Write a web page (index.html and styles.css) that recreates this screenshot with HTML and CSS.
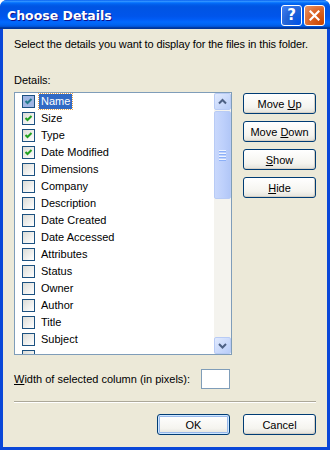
FILE: index.html
```html
<!DOCTYPE html>
<html lang="en">
<head>
    <meta charset="UTF-8">
    <title>Choose Details</title>
    <link rel="stylesheet" href="styles.css">
</head>
<body>
    <div class="window">
        <div class="titlebar">
            <span class="title">Choose Details</span>
            <div class="caption-buttons">
                <span class="cap-btn help">?</span>
                <span class="cap-btn close">
                    <svg width="11" height="11" viewBox="0 0 11 11"><path d="M1.5 1.5 L9.5 9.5 M9.5 1.5 L1.5 9.5" stroke="#fff" stroke-width="2.2" stroke-linecap="square"/></svg>
                </span>
            </div>
        </div>

        <div class="body">
            <p class="intro">Select the details you want to display for the files in this folder.</p>
            <p class="caption">Details:</p>

            <div class="main">
                <div class="listbox">
                    <ul class="items">
                        <li class="item selected"><span class="check on"></span><span class="text">Name</span></li>
                        <li class="item"><span class="check on"></span><span class="text">Size</span></li>
                        <li class="item"><span class="check on"></span><span class="text">Type</span></li>
                        <li class="item"><span class="check on"></span><span class="text">Date Modified</span></li>
                        <li class="item"><span class="check"></span><span class="text">Dimensions</span></li>
                        <li class="item"><span class="check"></span><span class="text">Company</span></li>
                        <li class="item"><span class="check"></span><span class="text">Description</span></li>
                        <li class="item"><span class="check"></span><span class="text">Date Created</span></li>
                        <li class="item"><span class="check"></span><span class="text">Date Accessed</span></li>
                        <li class="item"><span class="check"></span><span class="text">Attributes</span></li>
                        <li class="item"><span class="check"></span><span class="text">Status</span></li>
                        <li class="item"><span class="check"></span><span class="text">Owner</span></li>
                        <li class="item"><span class="check"></span><span class="text">Author</span></li>
                        <li class="item"><span class="check"></span><span class="text">Title</span></li>
                        <li class="item"><span class="check"></span><span class="text">Subject</span></li>
                        <!-- next row is scrolled just out of view, only its box peeks in -->
                        <li class="item"><span class="check"></span></li>
                    </ul>
                    <div class="scrollbar">
                        <div class="arrow">
                            <svg width="15" height="15" viewBox="0 0 15 15"><path d="M4 9.5 L7.5 6 L11 9.5" fill="none" stroke="#4d6185" stroke-width="2"/></svg>
                        </div>
                        <div class="track">
                            <div class="thumb">
                                <span class="grip"></span>
                                <span class="grip"></span>
                                <span class="grip"></span>
                                <span class="grip"></span>
                            </div>
                        </div>
                        <div class="arrow">
                            <svg width="15" height="15" viewBox="0 0 15 15"><path d="M4 6 L7.5 9.5 L11 6" fill="none" stroke="#4d6185" stroke-width="2"/></svg>
                        </div>
                    </div>
                </div>

                <div class="side-buttons">
                    <button class="btn">Move <u>U</u>p</button>
                    <button class="btn">Move <u>D</u>own</button>
                    <button class="btn"><u>S</u>how</button>
                    <button class="btn"><u>H</u>ide</button>
                </div>
            </div>

            <div class="width-row">
                <label class="width-label" for="colWidth"><u>W</u>idth of selected column (in pixels):</label>
                <input class="width-input" id="colWidth" type="text">
            </div>

            <div class="separator"></div>

            <div class="footer">
                <button class="btn default">OK</button>
                <button class="btn">Cancel</button>
            </div>
        </div>
    </div>
</body>
</html>
```

FILE: styles.css
```css
body {
    margin: 0;
    font-family: 'Liberation Sans', Arial, sans-serif;
    font-size: 11px;
    color: #000;
    background: #fff;
}
.window {
    width: 330px;
    height: 450px;
    display: flex;
    flex-direction: column;
    background: #0a47d8; /* XP frame blue */
    border-radius: 7px 7px 0 0;
    overflow: hidden;
}

/* Title bar */
.titlebar {
    height: 29px;
    flex: none;
    display: flex;
    align-items: center;
    justify-content: space-between;
    padding: 0 5px 0 7px;
    background: linear-gradient(to bottom, #0058ee 0%, #3593ff 4%, #288eff 6%, #127dff 8%, #036ffc 10%, #0262ee 14%, #0057e5 20%, #0054e3 24%, #0055eb 56%, #005bf5 66%, #026afe 76%, #0062ef 86%, #0052d6 92%, #0040ab 94%, #003092 100%);
}
.title {
    color: #fff;
    font-family: 'DejaVu Sans', sans-serif;
    font-weight: bold;
    font-size: 12.5px;
    text-shadow: 1px 1px #0f1089;
    padding-top: 1px;
}
.caption-buttons {
    display: flex;
    gap: 2px;
    padding-top: 1px;
}
.cap-btn {
    width: 19px;
    height: 19px;
    border: 1px solid #fff;
    border-radius: 3px;
    display: flex;
    align-items: center;
    justify-content: center;
    color: #fff;
}
.help {
    background: radial-gradient(circle at 90% 90%, #0054e9 0%, #2263d5 55%, #4483f7 100%);
    font-family: 'DejaVu Sans', sans-serif;
    font-weight: bold;
    font-size: 15px;
}
.close {
    background: radial-gradient(circle at 90% 90%, #cc4600 0%, #dc6527 55%, #e8976b 100%);
}

/* Dialog body */
.body {
    flex: 1;
    margin: 0 3px 3px;
    background: #ece9d8;
    padding: 8px 11px 12px;
    display: flex;
    flex-direction: column;
}
.body > * {
    flex: none;
}
.intro {
    margin: 0;
    line-height: 14px;
    white-space: nowrap;
    letter-spacing: -0.12px;
}
.caption {
    margin: 22px 0 5px;
    line-height: 14px;
}
.main {
    display: flex;
    gap: 11px;
}

/* List box with check boxes */
.listbox {
    width: 216px;
    height: 261px;
    border: 1px solid #7f9db9;
    background: #fff;
    display: flex;
    overflow: hidden;
}
.items {
    flex: 1;
    list-style: none;
    margin: 0;
    padding: 0;
    overflow: hidden;
}
.item {
    height: 17px;
    display: flex;
    align-items: center;
    padding-left: 7px;
}
.check {
    width: 11px;
    height: 11px;
    border: 1px solid #1c5180;
    background: linear-gradient(135deg, #dcdcd7, #fff);
    margin-right: 4px;
    flex: none;
}
.check.on {
    background: url("data:image/svg+xml,%3Csvg xmlns='http://www.w3.org/2000/svg' width='11' height='11'%3E%3Cpath d='M2.5 5 L4.5 7 L8.5 3' fill='none' stroke='%2321a121' stroke-width='2'/%3E%3C/svg%3E"), linear-gradient(135deg, #dcdcd7, #fff);
}
.selected .check.on {
    background: url("data:image/svg+xml,%3Csvg xmlns='http://www.w3.org/2000/svg' width='11' height='11'%3E%3Cpath d='M2.5 5 L4.5 7 L8.5 3' fill='none' stroke='%23217a8a' stroke-width='2'/%3E%3C/svg%3E"), #9fb5e3;
}
.text {
    padding: 1px 2px;
    line-height: 13px;
}
.selected .text {
    background: #316ac5;
    color: #fff;
    outline: 1px dotted #e6a24a;
}

/* Scroll bar */
.scrollbar {
    width: 17px;
    display: flex;
    flex-direction: column;
    background: #f4f3ee;
}
.arrow {
    height: 15px;
    border: 1px solid #b8cbf5;
    border-radius: 2px;
    background: linear-gradient(135deg, #e1eafe, #b8cdf9);
    display: flex;
    align-items: center;
    justify-content: center;
}
.track {
    flex: 1;
    padding: 1px 0;
}
.thumb {
    height: 86px;
    border: 1px solid #b8cbf5;
    border-radius: 2px;
    background: linear-gradient(to right, #c9d8fc, #bccffb 60%, #b2c7f7);
    display: flex;
    flex-direction: column;
    align-items: center;
    justify-content: center;
    gap: 1px;
}
.grip {
    width: 7px;
    height: 1px;
    background: #eef4fe;
    border-bottom: 1px solid #8cb0f8;
}

/* Buttons */
.btn {
    font-family: 'Liberation Sans', Arial, sans-serif;
    font-size: 11px;
    color: #000;
    width: 73px;
    height: 21px;
    padding: 0;
    border: 1px solid #003c74;
    border-radius: 3px;
    background: linear-gradient(to bottom, #fff 0%, #f5f4ef 70%, #e3e2da 100%);
    box-shadow: inset -1px -1px 0 #d6d0c5;
}
.btn.default {
    box-shadow: inset 0 0 0 1px #cee7ff, inset 0 0 0 2px #98b8ea;
}
.side-buttons {
    display: flex;
    flex-direction: column;
    gap: 7px;
    padding-top: 1px;
}

/* Column width row */
.width-row {
    display: flex;
    align-items: center;
    margin-top: 14px;
}
.width-label {
    width: 187px;
}
.width-input {
    width: 27px;
    height: 18px;
    padding: 0;
    border: 1px solid #7f9db9;
    background: #fff;
}
.separator {
    margin-top: 12px;
    height: 1px;
    background: #aca899;
    border-bottom: 1px solid #fff;
}
.footer {
    display: flex;
    justify-content: flex-end;
    gap: 13px;
    margin-top: 11px;
}
```
